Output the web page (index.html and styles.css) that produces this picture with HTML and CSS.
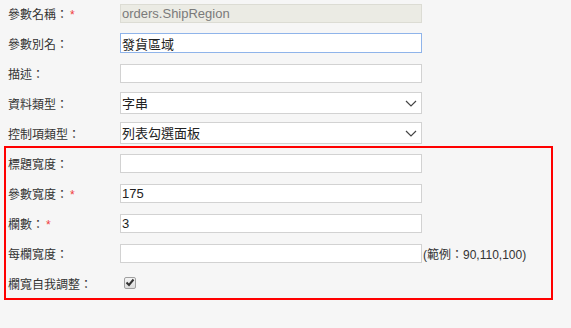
FILE: index.html
```html
<!DOCTYPE html>
<html lang="zh-Hant">
<head>
	<meta charset="UTF-8">
	<title>參數設定</title>
	<link rel="stylesheet" href="styles.css">
</head>
<body>
	<div id="form">
		<div class="row">
			<label class="lbl">參數名稱：<span class="req">*</span></label>
			<input class="txt disabled" type="text" value="orders.ShipRegion" disabled>
		</div>
		<div class="row">
			<label class="lbl">參數別名：</label>
			<input class="txt focus" type="text" value="發貨區域">
		</div>
		<div class="row">
			<label class="lbl">描述：</label>
			<input class="txt" type="text" value="">
		</div>
		<div class="row">
			<label class="lbl">資料類型：</label>
			<span class="sel">
				<select><option>字串</option></select>
				<svg class="arrow" width="12" height="7" viewBox="0 0 12 7"><path d="M1 1 L6 6 L11 1" fill="none" stroke="#444" stroke-width="1.2"/></svg>
			</span>
		</div>
		<div class="row">
			<label class="lbl">控制項類型：</label>
			<span class="sel">
				<select><option>列表勾選面板</option></select>
				<svg class="arrow" width="12" height="7" viewBox="0 0 12 7"><path d="M1 1 L6 6 L11 1" fill="none" stroke="#444" stroke-width="1.2"/></svg>
			</span>
		</div>
		<div class="row">
			<label class="lbl">標題寬度：</label>
			<input class="txt" type="text" value="">
		</div>
		<div class="row">
			<label class="lbl">參數寬度：<span class="req">*</span></label>
			<input class="txt" type="text" value="175">
		</div>
		<div class="row">
			<label class="lbl">欄數：<span class="req">*</span></label>
			<input class="txt" type="text" value="3">
		</div>
		<div class="row">
			<label class="lbl">每欄寬度：</label>
			<input class="txt" type="text" value="">
			<span class="hint">(範例：90,110,100)</span>
		</div>
		<div class="row">
			<label class="lbl">欄寬自我調整：</label>
			<span class="chk">
				<svg width="10" height="9" viewBox="0 0 10 9"><path d="M1.5 4.5 L4 7 L8.5 1.5" fill="none" stroke="#333" stroke-width="2"/></svg>
			</span>
		</div>

		<div id="mark"></div>
	</div>
</body>
</html>
```
FILE: styles.css
```css
*{
	margin:0;
	padding:0;
	box-sizing:border-box;
}
body{
	background:#f6f6f6;
	font-family:"Liberation Sans", Arial, "Noto Sans CJK TC", sans-serif;
	color:#333;
	width:571px;
	height:328px;
	overflow:hidden;
}
#form{

	position:relative;
	padding:3px 8px 0;
}
.row{

	display:flex;
	align-items:center;
	height:20px;
	margin-bottom:10px;
}
.lbl{

	width:112px;
	flex:none;
	font-size:12px;
	color:#333;
}
.req{

	color:#f03c3c;
	margin-left:2px;
}
.txt{

	width:302px;
	height:19px;
	border:1px solid #d2d2d2;
	background:#fff;
	font-family:"Liberation Sans", Arial, "Noto Sans CJK TC", sans-serif;
	font-size:13px;
	color:#222;
	padding:0 1px;
	outline:none;
}
.txt.disabled{

	background:#ebebe4;
	color:#7a7a7a;
	border-color:#dcdcd4;
}
.txt.focus{

	height:20px;
	border-color:#8fb4ea;
}
.sel{

	position:relative;
	display:block;
	width:302px;
	height:22px;
}
.sel select{

	appearance:none;
	-webkit-appearance:none;
	width:302px;
	height:22px;
	border:1px solid #d2d2d2;
	background:#fff;
	font-family:"Liberation Sans", Arial, "Noto Sans CJK TC", sans-serif;
	font-size:13px;
	color:#222;
	padding:0 1px;
	outline:none;
}
.sel .arrow{

	position:absolute;
	right:5px;
	top:8px;
}
.hint{

	font-size:12px;
	color:#333;
	margin-left:1px;
	white-space:nowrap;
}
.chk{

	display:flex;
	align-items:center;
	justify-content:center;
	width:12px;
	height:12px;
	margin-left:4px;
	margin-top:-1px;
	border:1px solid #a0a0a0;
	border-radius:2px;
	background:linear-gradient(#f4f4f4, #dcdcdc);
}
#mark{

	position:absolute;
	left:4px;
	top:146px;
	width:549px;
	height:154px;
	border:2px solid #ff0000;
}
```
